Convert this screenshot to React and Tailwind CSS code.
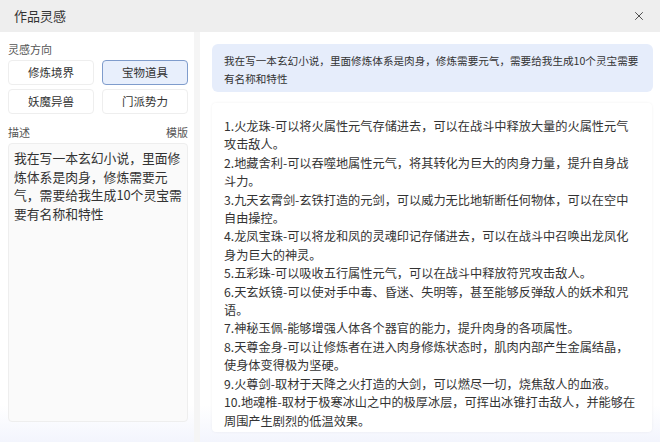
import { X } from 'lucide-react';

const font = { fontFamily: '"Noto Sans CJK SC", "Noto Sans", sans-serif' };

const directions = [
  { label: '修炼境界', active: false },
  { label: '宝物道具', active: true },
  { label: '妖魔异兽', active: false },
  { label: '门派势力', active: false },
];

const items = [
  '1.火龙珠-可以将火属性元气存储进去，可以在战斗中释放大量的火属性元气攻击敌人。',
  '2.地藏舍利-可以吞噬地属性元气，将其转化为巨大的肉身力量，提升自身战斗力。',
  '3.九天玄霄剑-玄铁打造的元剑，可以威力无比地斩断任何物体，可以在空中自由操控。',
  '4.龙凤宝珠-可以将龙和凤的灵魂印记存储进去，可以在战斗中召唤出龙凤化身为巨大的神灵。',
  '5.五彩珠-可以吸收五行属性元气，可以在战斗中释放符咒攻击敌人。',
  '6.天玄妖镜-可以使对手中毒、昏迷、失明等，甚至能够反弹敌人的妖术和咒语。',
  '7.神秘玉佩-能够增强人体各个器官的能力，提升肉身的各项属性。',
  '8.天尊金身-可以让修炼者在进入肉身修炼状态时，肌肉内部产生金属结晶，使身体变得极为坚硬。',
  '9.火尊剑-取材于天降之火打造的大剑，可以燃尽一切，烧焦敌人的血液。',
  '10.地魂椎-取材于极寒冰山之中的极厚冰层，可挥出冰锥打击敌人，并能够在周围产生剧烈的低温效果。',
];

const prompt = '我在写一本玄幻小说，里面修炼体系是肉身，修炼需要元气，需要给我生成10个灵宝需要有名称和特性';

function App() {
  return (
    <div className="w-[660px] h-[442px] flex flex-col bg-white overflow-hidden text-[#333]" style={font}>
      <div className="h-[32px] shrink-0 flex items-center justify-between pl-[14px] pr-[14px] bg-[#eeeeee]">
        <span className="text-[13px]">作品灵感</span>
        <X size={14} strokeWidth={1.6} className="text-[#444]" />
      </div>

      <div className="flex-1 flex min-h-0 bg-[linear-gradient(to_bottom,#ffffff_91%,#f3f5fd)]">
        <div className="w-[194px] shrink-0 flex flex-col pl-[8px] pr-[6px] pt-[9px] pb-[20px]">
          <div className="text-[11px] text-[#555] leading-[16px]">灵感方向</div>
          <div className="grid grid-cols-2 gap-x-[8px] gap-y-[4px] mt-[3px]">
            {directions.map((d) => (
              <button
                key={d.label}
                className={
                  d.active
                    ? 'h-[25px] rounded-[4px] border border-[#7f9ccc] bg-[#e8effc] text-[11.5px] text-[#333]'
                    : 'h-[25px] rounded-[4px] border border-[#eeeeee] bg-white text-[11.5px] text-[#333]'
                }
              >
                {d.label}
              </button>
            ))}
          </div>
          <div className="flex justify-between text-[11px] text-[#555] leading-[16px] mt-[10px]">
            <span>描述</span>
            <span>模版</span>
          </div>
          <div className="mt-[3px] flex-1 rounded-[4px] border border-[#eeeeee] bg-[#fafafa] px-[5px] py-[5px] text-[12.8px] leading-[18.7px] text-[#333]">
            {prompt}
          </div>
        </div>

        <div className="w-[6px] shrink-0 bg-[#f5f5f5]" />

        <div className="flex-1 flex flex-col px-[12px] pt-[12px] pb-[10px]">
          <div className="w-[441px] rounded-[6px] bg-[#e6edfb] px-[12px] pt-[8px] pb-[4px] text-[10.6px] leading-[18px] text-[#333]">
            {prompt}
          </div>
          <div className="w-[440px] mt-[11px] flex-1 rounded-[4px] bg-white shadow-[0_0_3px_rgba(0,0,0,0.06)] pl-[12px] pr-[14px] pt-[14px] text-[12.2px] leading-[18.4px] text-[#333]">
            {items.map((t) => (
              <div key={t}>{t}</div>
            ))}
          </div>
        </div>
      </div>
    </div>
  );
}

export default App;
